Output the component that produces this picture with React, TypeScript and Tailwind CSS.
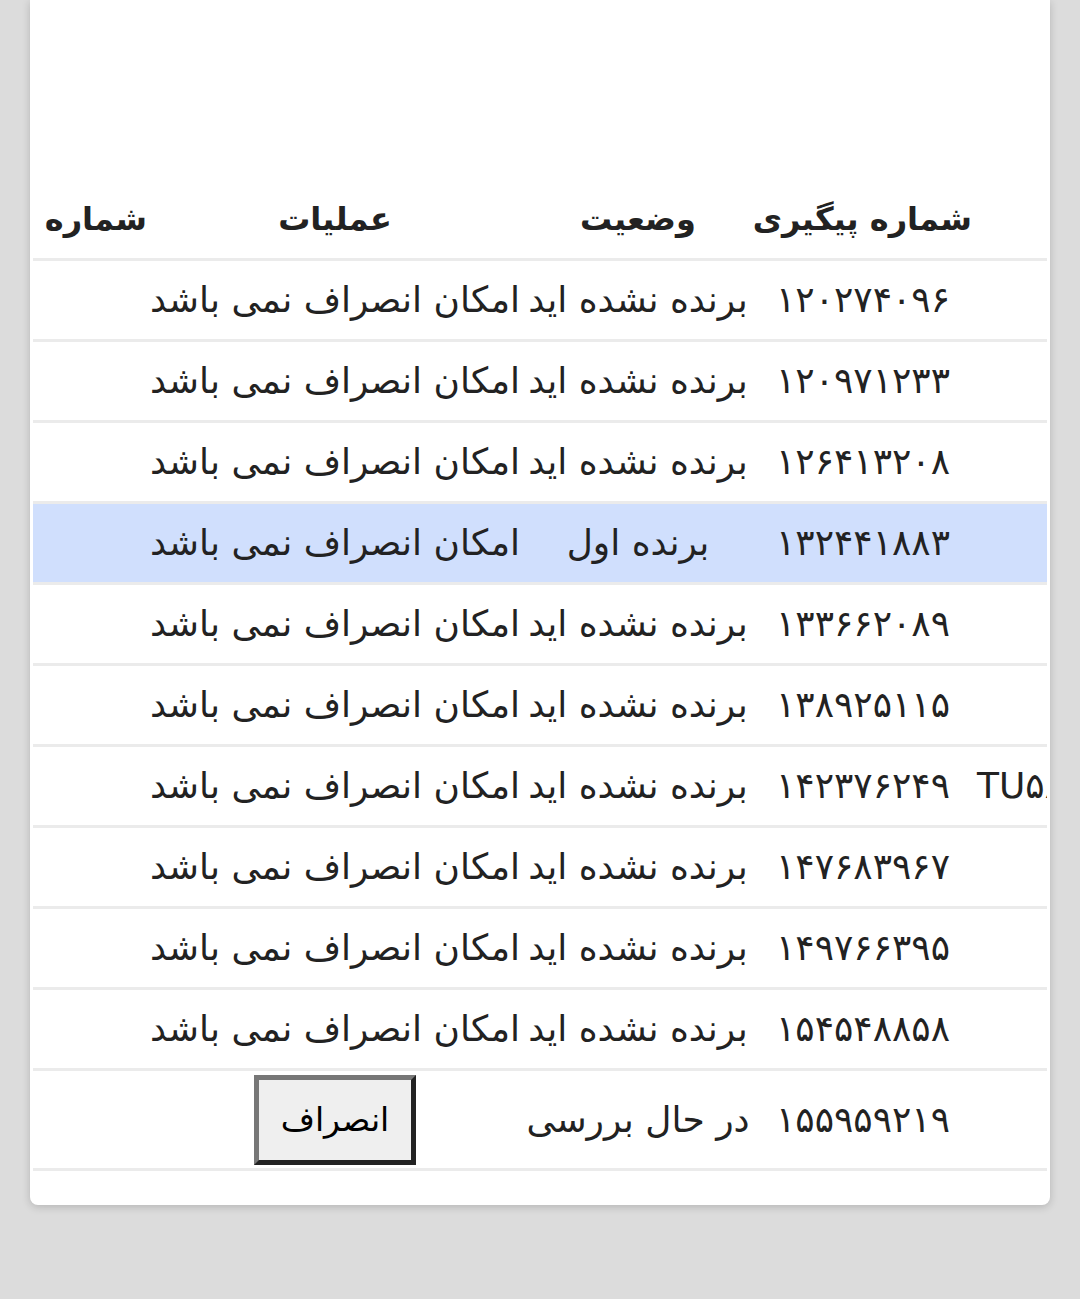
import React from "react";

type Row = {
  extra?: string;
  code: string;
  status: string;
  action: "none" | "cancel";
  active?: boolean;
};

const rows: Row[] = [
  { code: "۱۲۰۲۷۴۰۹۶", status: "برنده نشده اید", action: "none" },
  { code: "۱۲۰۹۷۱۲۳۳", status: "برنده نشده اید", action: "none" },
  { code: "۱۲۶۴۱۳۲۰۸", status: "برنده نشده اید", action: "none" },
  { code: "۱۳۲۴۴۱۸۸۳", status: "برنده اول", action: "none", active: true },
  { code: "۱۳۳۶۶۲۰۸۹", status: "برنده نشده اید", action: "none" },
  { code: "۱۳۸۹۲۵۱۱۵", status: "برنده نشده اید", action: "none" },
  { extra: "TU۵۸۲۴۱۷۳", code: "۱۴۲۳۷۶۲۴۹", status: "برنده نشده اید", action: "none" },
  { code: "۱۴۷۶۸۳۹۶۷", status: "برنده نشده اید", action: "none" },
  { code: "۱۴۹۷۶۶۳۹۵", status: "برنده نشده اید", action: "none" },
  { code: "۱۵۴۵۴۸۸۵۸", status: "برنده نشده اید", action: "none" },
  { code: "۱۵۵۹۵۹۲۱۹", status: "در حال بررسی", action: "cancel" },
];

const font = { fontFamily: '"DejaVu Sans", sans-serif' };

const App = () => {
  return (
    <div className="min-h-[1299px] bg-[#dcdcdc]" style={font}>
      <div className="mx-[30px] bg-white rounded-b-lg shadow-[0_2px_8px_rgba(0,0,0,0.18)] pt-[180px] pb-[34px]">
        <div className="mx-[3px] overflow-hidden" dir="rtl">
          {/* header */}
          <div className="flex w-[1202px] -mr-[103px] h-[81px] border-b-[3px] border-[#ebebeb] items-center text-[#222] font-bold text-[32px] whitespace-nowrap">
            <div className="w-[178px] shrink-0" />
            <div className="w-[218px] shrink-0 text-center">شماره پیگیری</div>
            <div className="w-[232px] shrink-0 text-center">وضعیت</div>
            <div className="w-[374px] shrink-0 text-center">عملیات</div>
            <div className="w-[200px] shrink-0 text-right pr-[1px]">شماره قرعه</div>
          </div>

          {rows.map((r, i) => (
            <div
              key={i}
              className={`flex w-[1202px] -mr-[103px] border-b-[3px] border-[#ebebeb] items-center text-[#222] text-[36px] whitespace-nowrap ${
                r.action === "cancel" ? "h-[100px]" : "h-[81px]"
              } ${r.active ? "bg-[#d0dffd]" : ""}`}
            >
              <div className="w-[178px] shrink-0 text-left pl-[5px]" dir="ltr">
                {r.extra}
              </div>
              <div className="w-[218px] shrink-0 text-center">{r.code}</div>
              <div className="w-[232px] shrink-0 text-center">{r.status}</div>
              <div className="w-[374px] shrink-0 flex justify-center">
                {r.action === "cancel" ? (
                  <button className="w-[162px] h-[90px] bg-[#efefef] border-[5px] border-t-[#777] border-l-[#777] border-r-[#222] border-b-[#222] text-[33px] text-black">
                    انصراف
                  </button>
                ) : (
                  "امکان انصراف نمی باشد"
                )}
              </div>
              <div className="w-[200px] shrink-0" />
            </div>
          ))}
        </div>
      </div>
    </div>
  );
};

export default App;
